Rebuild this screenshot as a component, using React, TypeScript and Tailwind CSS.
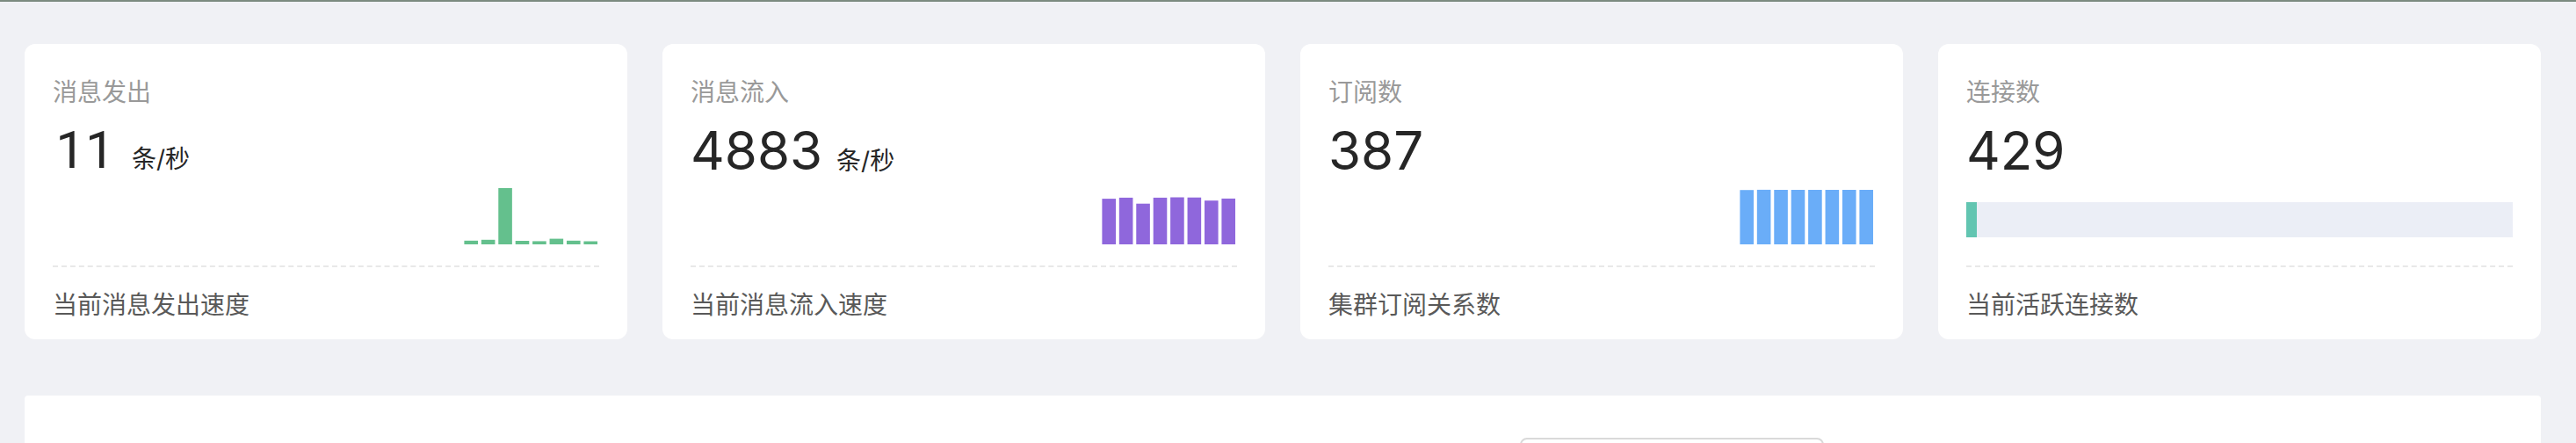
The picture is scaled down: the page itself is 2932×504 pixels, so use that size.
import type { ReactNode } from 'react'

const PITCH = 19.43
const BAR_WIDTH = 15.6

function MiniBars({ heights, className }: { heights: number[]; className: string }) {
  return (
    <svg width={156} height={64} viewBox="0 0 156 64" className={className} aria-hidden="true">
      {heights.map((h, i) => (
        <rect key={i} x={2.4 + i * PITCH} y={64 - h} width={BAR_WIDTH} height={h} fill="currentColor" />
      ))}
    </svg>
  )
}

function Progress({ percent }: { percent: number }) {
  return (
    <div className="mb-8 h-10 w-full bg-[#ebeef6]">
      <div className="h-full bg-[#62c5b1]" style={{ width: `${percent}%` }} />
    </div>
  )
}

type StatCardProps = {
  title: string
  value: string
  unit?: string
  footer: string
  valueFont?: string
  children: ReactNode
}

function StatCard({ title, value, unit, footer, valueFont = '', children }: StatCardProps) {
  return (
    <section className="flex flex-col rounded-xl bg-white px-8 pt-[33px]">
      <h2 className="text-[28px] leading-[44px] text-[#999999]">{title}</h2>
      <p className="mt-1 flex items-baseline gap-4 text-[#262626]">
        <span className={`min-w-[74px] text-center text-[60px] leading-[80px] ${valueFont}`}>{value}</span>
        {unit && <span className="text-[28px] leading-[44px]">{unit}</span>}
      </p>
      <div className="flex h-[91px] items-end justify-end">{children}</div>
      <footer className="border-t-2 border-dashed border-[#e8e8e8] pt-[21px] pb-[17px] text-[28px] leading-[44px] text-[#595959]">
        {footer}
      </footer>
    </section>
  )
}

export default function App() {
  return (
    <div className="h-screen overflow-hidden border-t-2 border-[#7c8b80] bg-[#f0f1f5] pr-10 pl-7 font-['Inter','Noto_Sans_CJK_SC',sans-serif]">
      <main className="flex flex-col gap-16 pt-12">
        <div className="grid grid-cols-4 gap-10">
          <StatCard
            title="消息发出"
            value="11"
            unit="条/秒"
            footer="当前消息发出速度"
            valueFont="font-['Roboto',sans-serif]"
          >
            <MiniBars heights={[4.2, 5.2, 64, 4, 3.6, 6.4, 4.2, 3.5]} className="mb-6 text-[#64c08d]" />
          </StatCard>
          <StatCard title="消息流入" value="4883" unit="条/秒" footer="当前消息流入速度">
            <MiniBars
              heights={[51.9, 53.1, 46.3, 53.1, 53.5, 53.3, 49.8, 52.1]}
              className="mb-6 text-[#8f67dc]"
            />
          </StatCard>
          <StatCard title="订阅数" value="387" footer="集群订阅关系数">
            <MiniBars heights={[61.8, 62.1, 62, 62, 62, 62, 62, 62]} className="mb-6 text-[#6aadf8]" />
          </StatCard>
          <StatCard title="连接数" value="429" footer="当前活跃连接数">
            <Progress percent={2} />
          </StatCard>
        </div>
        <section className="flex justify-end rounded bg-white pt-12 pr-[816px] pb-12">
          <input
            type="text"
            aria-label="时间范围"
            className="h-16 w-[346px] rounded-lg border-2 border-[#d9d9d9] bg-white px-5 text-[28px]"
          />
        </section>
      </main>
    </div>
  )
}
